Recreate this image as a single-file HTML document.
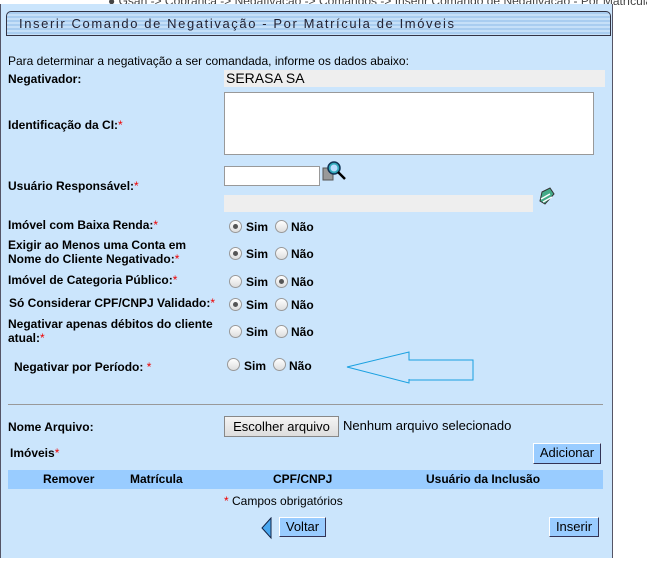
<!DOCTYPE html>
<html><head><meta charset="utf-8"><style>
body{margin:0;width:647px;height:572px;background:#fff;position:relative;overflow:hidden;font-family:"Liberation Sans",Arial,sans-serif;font-size:12px;color:#000}
.a{position:absolute;white-space:nowrap}
.panel{position:absolute;left:0;top:4px;width:611px;height:554px;background:#cbe5fc;border-right:1px solid #556;border-left:1px solid #556}
.title{position:absolute;left:6px;top:11px;width:603px;height:23px;border:1px solid #334;border-radius:5px 5px 0 0;background:repeating-linear-gradient(#a9cdf0 0 2px,#c6e0f8 2px 4px);}
.title span{position:absolute;left:12px;top:4px;font-size:13px;letter-spacing:1.6px;color:#223}
b{font-weight:bold}
.r{color:#e00}
.rad{position:absolute;width:11px;height:11px;border-radius:50%;border:1px solid #999;background:linear-gradient(#fff,#ddd)}
.rad.on::after{content:"";position:absolute;left:3px;top:3px;width:5px;height:5px;border-radius:50%;background:#555}
.btn{position:absolute;background:#99ccff;border:1px solid #000;border-color:#fff #335 #335 #fff;font-size:13px;text-align:center;line-height:18px}
</style></head><body>
<div class="a" style="left:108px;top:-6px;width:539px;overflow:hidden;color:#444;font-size:12px">&#9679; Gsan -&gt; Cobrança -&gt; Negativação -&gt; Comandos -&gt; Inserir Comando de Negativação - Por Matrícula de Imóveis</div>
<div class="panel"></div>
<div class="title"><span>Inserir Comando de Negativação - Por Matrícula de Imóveis</span></div>
<div class="a" style="left:8px;top:54px;font-size:12px">Para determinar a negativação a ser comandada, informe os dados abaixo:</div>
<div class="a" style="left:8px;top:72px"><b>Negativador:</b></div>
<div class="a" style="left:224px;top:70px;width:379px;height:17px;background:#eee;font-size:14px;line-height:17px;padding-left:2px">SERASA SA</div>
<div class="a" style="left:8px;top:118px"><b>Identificação da CI:</b><span class="r">*</span></div>
<div class="a" style="left:224px;top:92px;width:368px;height:61px;background:#fff;border:1px solid #999"></div>
<div class="a" style="left:8px;top:179px"><b>Usuário Responsável:</b><span class="r">*</span></div>
<div class="a" style="left:224px;top:166px;width:94px;height:18px;background:#fff;border:1px solid #999"></div>
<svg class="a" style="left:322px;top:160px" width="26" height="24" viewBox="0 0 26 24"><rect x="1" y="8" width="10" height="12" fill="#999" stroke="#555"/><circle cx="12" cy="8" r="6" fill="#3ab" stroke="#135" stroke-width="1.5"/><circle cx="12" cy="8" r="3.5" fill="#bdf"/><path d="M16 12l7 7" stroke="#000" stroke-width="2.5"/></svg>
<div class="a" style="left:224px;top:195px;width:309px;height:17px;background:#eee"></div>
<svg class="a" style="left:537px;top:186px" width="20" height="22" viewBox="0 0 20 22"><path d="M5 6l8-4 4 6-9 10-5-3z" fill="#4a8" stroke="#333"/><path d="M4 13l9-5M6 16l9-5" stroke="#fff" stroke-width="1.5"/></svg>
<div class="a" style="left:8px;top:218px"><b>Imóvel com Baixa Renda:</b><span class="r">*</span></div>
<div class="a" style="left:8px;top:238px;line-height:14px"><b>Exigir ao Menos uma Conta em<br>Nome do Cliente Negativado:</b><span class="r">*</span></div>
<div class="a" style="left:8px;top:273px"><b>Imóvel de Categoria Público:</b><span class="r">*</span></div>
<div class="a" style="left:9px;top:296px"><b>Só Considerar CPF/CNPJ Validado:</b><span class="r">*</span></div>
<div class="a" style="left:8px;top:317px;line-height:14px"><b>Negativar apenas débitos do cliente<br>atual:</b><span class="r">*</span></div>
<div class="a" style="left:14px;top:360px"><b>Negativar por Período: </b><span class="r">*</span></div>

<div class="rad on" style="left:229px;top:220px"></div><div class="a" style="left:246px;top:220px"><b>Sim</b></div><div class="rad" style="left:275px;top:220px"></div><div class="a" style="left:291px;top:220px"><b>Não</b></div>
<div class="rad on" style="left:229px;top:247px"></div><div class="a" style="left:246px;top:247px"><b>Sim</b></div><div class="rad" style="left:275px;top:247px"></div><div class="a" style="left:291px;top:247px"><b>Não</b></div>
<div class="rad" style="left:229px;top:275px"></div><div class="a" style="left:246px;top:275px"><b>Sim</b></div><div class="rad on" style="left:275px;top:275px"></div><div class="a" style="left:291px;top:275px"><b>Não</b></div>
<div class="rad on" style="left:229px;top:298px"></div><div class="a" style="left:246px;top:298px"><b>Sim</b></div><div class="rad" style="left:275px;top:298px"></div><div class="a" style="left:291px;top:298px"><b>Não</b></div>
<div class="rad" style="left:229px;top:325px"></div><div class="a" style="left:246px;top:325px"><b>Sim</b></div><div class="rad" style="left:275px;top:325px"></div><div class="a" style="left:291px;top:325px"><b>Não</b></div>
<div class="rad" style="left:227px;top:358px"></div><div class="a" style="left:244px;top:359px"><b>Sim</b></div><div class="rad" style="left:273px;top:358px"></div><div class="a" style="left:289px;top:359px"><b>Não</b></div>
<svg class="a" style="left:340px;top:348px" width="140" height="36" viewBox="0 0 140 36"><path d="M7 19L69 4v8h64v20H69v-1 2v2L7 19z" fill="none" stroke="#19a0e0" stroke-width="1"/></svg>

<div class="a" style="left:8px;top:404px;width:595px;height:1px;background:#999"></div>
<div class="a" style="left:8px;top:420px"><b>Nome Arquivo:</b></div>
<div class="a" style="left:224px;top:416px;width:113px;height:19px;background:linear-gradient(#f4f4f4,#ddd);border:1px solid #888;font-size:13px;line-height:19px;text-align:center">Escolher arquivo</div>
<div class="a" style="left:343px;top:418px;font-size:13px">Nenhum arquivo selecionado</div>
<div class="a" style="left:10px;top:446px"><b>Imóveis</b><span class="r">*</span></div>
<div class="btn" style="left:533px;top:443px;width:66px;height:19px">Adicionar</div>
<div class="a" style="left:8px;top:470px;width:595px;height:19px;background:#99ccff;font-weight:bold;line-height:19px">
<span class="a" style="left:35px">Remover</span><span class="a" style="left:122px">Matrícula</span><span class="a" style="left:265px">CPF/CNPJ</span><span class="a" style="left:418px">Usuário da Inclusão</span></div>
<div class="a" style="left:224px;top:494px"><span class="r">*</span> Campos obrigatórios</div>
<svg class="a" style="left:260px;top:517px" width="14" height="24"><path d="M11 1L2 11l9 10z" fill="#4aa8f0" stroke="#124"/></svg>
<div class="btn" style="left:279px;top:517px;width:45px;height:18px">Voltar</div>
<div class="btn" style="left:549px;top:517px;width:48px;height:18px">Inserir</div>
</body></html>
